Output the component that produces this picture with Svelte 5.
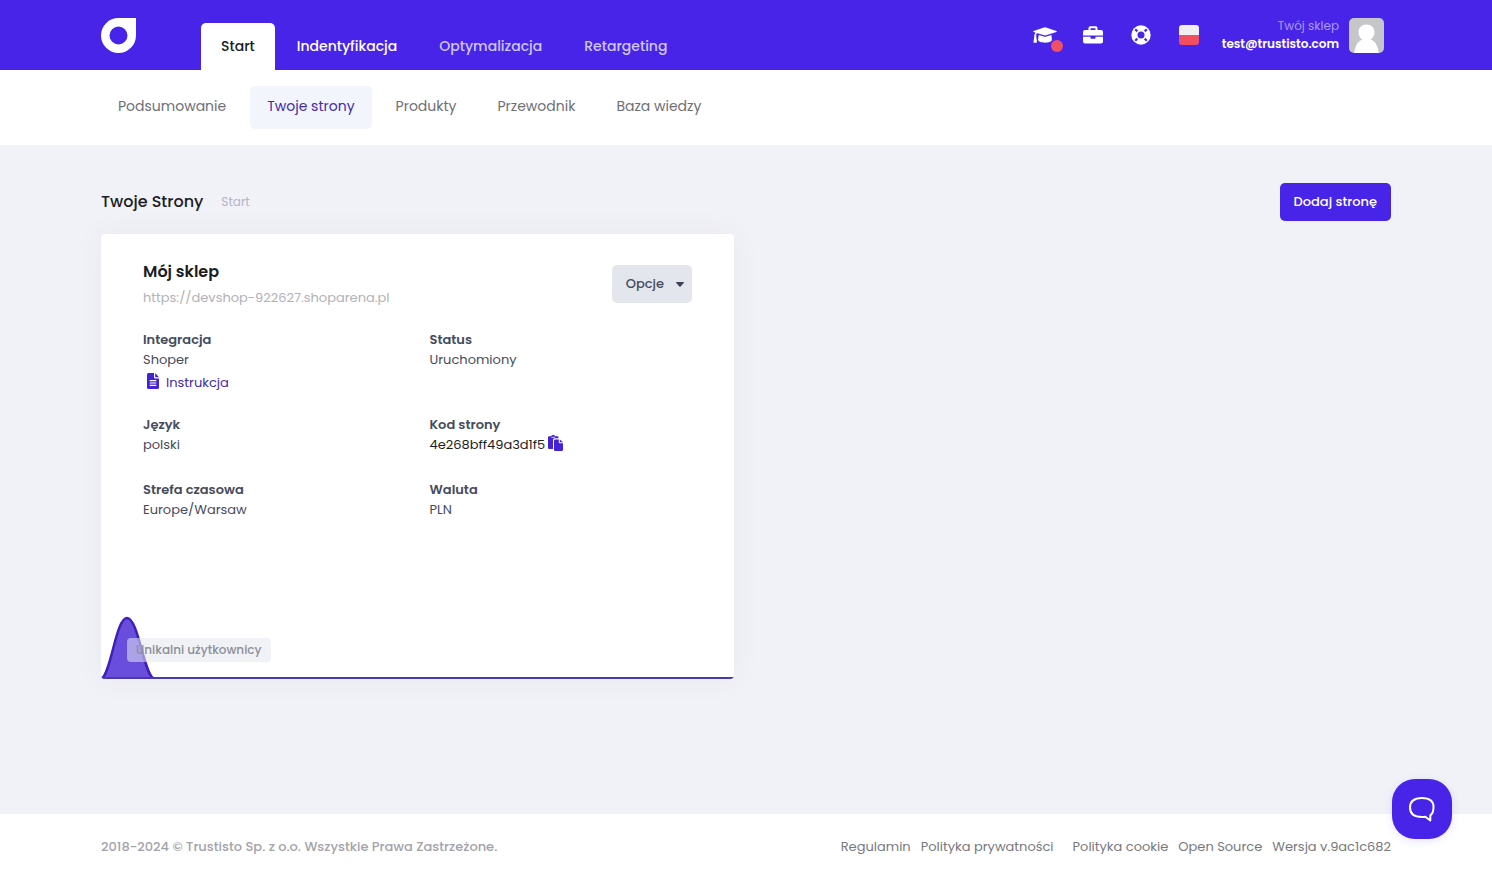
<script>
  let activeTab = "Start";
  let activePage = "Twoje strony";

  const tabs = [
    { name: "Start" },
    { name: "Indentyfikacja", bright: true },
    { name: "Optymalizacja" },
    { name: "Retargeting" }
  ];
  const pages = ["Podsumowanie", "Twoje strony", "Produkty", "Przewodnik", "Baza wiedzy"];

  const site = {
    name: "Mój sklep",
    url: "https://devshop-922627.shoparena.pl",
    code: "4e268bff49a3d1f5"
  };

  function copyCode() {
    navigator.clipboard?.writeText(site.code);
  }
</script>

<div class="page">
  <header class="topbar">
    <div class="container topbar-inner">
      <a class="logo" href="#start" aria-label="Trustisto">
        <svg width="35" height="35" viewBox="0 0 35 35">
          <path fill="#fff" fill-rule="evenodd" d="M17.500 0H35v17.500A17.500 17.500 0 1 1 17.500 0zm0 8.500a9 9 0 1 0 0 18 9 9 0 0 0 0-18z" />
        </svg>
      </a>

      <nav class="tabs">
        {#each tabs as tab}
          <a
            href="#{tab.name}"
            class="tab"
            class:bright={tab.bright}
            class:active={tab.name === activeTab}
            on:click|preventDefault={() => (activeTab = tab.name)}>{tab.name}</a>
        {/each}
      </nav>

      <div class="tools">
        <button class="tool" aria-label="Szkolenia">
          <svg width="24" height="20" viewBox="0 0 24 20" fill="#fff">
            <path d="M12 2.400 Q12.500 2.300 13 2.500L23.400 5.900Q24.300 6.400 23.400 6.900L13 10.300Q12 10.600 11 10.300L4.500 8.200Q3 8.500 2.900 9.600Q3.800 10.200 3.200 11.200L4 17Q4 17.700 3.300 17.700H1.100Q.4 17.700.5 17L1.300 11.200Q.8 10.200 1.700 9.600Q1.800 8.400 2.500 7.600L.6 6.900Q-.3 6.400.6 5.900L11 2.500z" />
            <path d="M5.700 10 10.700 11.600Q12 12 13.300 11.600L18.400 10 18.900 14.800C18.900 18.600 5.100 18.600 5.100 14.800z" />
          </svg>
          <span class="dot"></span>
        </button>
        <button class="tool" aria-label="Narzędzia">
          <svg width="20" height="20" viewBox="0 0 20 20" fill="#fff">
            <path fill-rule="evenodd" d="M5.500 5V3Q5.500 1.200 7.300 1.200H12.700Q14.500 1.200 14.500 3V5H18Q20 5 20 7V10.500H0V7Q0 5 2 5zM7.500 3.200V5H12.500V3.200z" />
            <path d="M0 11.700H7.500V13Q7.500 13.700 8.200 13.700H11.800Q12.500 13.700 12.500 13V11.700H20V16.500Q20 18.500 18 18.500H2Q0 18.500 0 16.500z" />
          </svg>
        </button>
        <button class="tool" aria-label="Pomoc">
          <svg width="20" height="20" viewBox="0 0 20 20">
            <circle cx="10" cy="10" r="9.700" fill="#fff" />
            <path d="M4.200 4.200 15.800 15.800M15.800 4.200 4.200 15.800" stroke="#4824e9" stroke-width="2.200" />
            <circle cx="10" cy="10" r="5.200" fill="#fff" />
            <circle cx="10" cy="10" r="3.500" fill="#4824e9" />
          </svg>
        </button>
        <button class="tool" aria-label="Język: polski">
          <svg width="20" height="20" viewBox="0 0 20 20">
            <path fill="#f1eff3" d="M3 0H17Q20 0 20 3V10H0V3Q0 0 3 0z" />
            <path fill="#ef4f5e" d="M0 10H20V17Q20 20 17 20H3Q0 20 0 17z" />
          </svg>
        </button>
      </div>

      <a class="account" href="#account">
        <span class="who">
          <span class="shop">Twój sklep</span>
          <span class="mail">test@trustisto.com</span>
        </span>
        <svg class="avatar" width="35" height="35" viewBox="0 0 35 35">
          <rect width="35" height="35" fill="#c6c6ca" />
          <path fill="#fff" d="M17.500 6.500c4.600 0 8 3.400 8 7.700 0 3.400-1.800 6-4 7.400 4.300 1.400 7 5 8.300 13.400H5.200c1.300-8.400 4-12 8.300-13.400-2.200-1.400-4-4-4-7.400 0-4.300 3.400-7.700 8-7.700z" />
        </svg>
      </a>
    </div>
  </header>

  <div class="subbar">
    <nav class="container subnav">
      {#each pages as page}
        <a
          href="#{page}"
          class:active={page === activePage}
          on:click|preventDefault={() => (activePage = page)}>{page}</a>
      {/each}
    </nav>
  </div>

  <main class="container content">
    <div class="heading">
      <h1>Twoje Strony</h1>
      <a class="crumb" href="#start">Start</a>
      <button class="btn-primary">Dodaj stronę</button>
    </div>

    <div class="cards">
      <section class="card">
        <div class="card-head">
          <div>
            <h2>{site.name}</h2>
            <a class="url" href={site.url}>{site.url}</a>
          </div>
          <button class="btn-options">
            Opcje
            <svg width="8" height="5" viewBox="0 0 8 5"><path fill="#3f4254" d="M.6 0h6.800q.9.200.3.900L4.600 4.600q-.6.500-1.200 0L.3.900Q-.3.200.6 0z" /></svg>
          </button>
        </div>

        <dl class="details">
          <div class="item tall">
            <dt>Integracja</dt>
            <dd>Shoper</dd>
            <dd>
              <a class="manual" href="#instrukcja">
                <svg width="12" height="16" viewBox="0 0 12 16">
                  <path fill="#4322d6" d="M1.500 0H7V4.500Q7 5.500 8 5.500H12V14.500Q12 16 10.500 16H1.500Q0 16 0 14.500V1.500Q0 0 1.500 0zM8.200 0 12 4.300H8.200z" />
                  <path stroke="#fff" stroke-width="1.200" d="M2.700 7.700H9.300M2.700 10H9.300M2.700 12.300H9.300" />
                </svg>
                Instrukcja
              </a>
            </dd>
          </div>
          <div class="item tall">
            <dt>Status</dt>
            <dd>Uruchomiony</dd>
          </div>
          <div class="item">
            <dt>Język</dt>
            <dd>polski</dd>
          </div>
          <div class="item">
            <dt>Kod strony</dt>
            <dd class="code">
              {site.code}
              <button class="copy" aria-label="Kopiuj kod" on:click={copyCode}>
                <svg width="15" height="16" viewBox="0 0 15 16" fill="#4322d6">
                  <path d="M1.200 1.200H3Q3.500 0 5.200 0T7.400 1.200H9.300Q10.500 1.200 10.500 2.400V3.300H6.700Q5 3.300 5 5V14H1.200Q0 14 0 12.800V2.400Q0 1.200 1.200 1.200z" />
                  <path d="M7.200 4.400H10.800V7.300Q10.800 8.200 11.700 8.200H15V14.800Q15 16 13.800 16H7.200Q6 16 6 14.800V5.600Q6 4.400 7.200 4.400zM11.800 4.400 15 7.200H11.800z" />
                  <path d="M3.300 2.300H7.100" stroke="#fff" stroke-width=".8" />
                </svg>
              </button>
            </dd>
          </div>
          <div class="item">
            <dt>Strefa czasowa</dt>
            <dd>Europe/Warsaw</dd>
          </div>
          <div class="item">
            <dt>Waluta</dt>
            <dd>PLN</dd>
          </div>
        </dl>

        <div class="chart">
          <svg width="100%" height="63">
            <path fill="#4322d6" fill-opacity=".8" d="M1 62C10 57 15 2 26 2S43 57 52 62z" />
            <path fill="none" stroke="#3f1fb8" stroke-width="2.500" d="M1 62C10 57 15 2 26 2S43 57 52 62" />
            <rect x="0" y="61" width="100%" height="2" fill="#4a3aa8" />
          </svg>
          <span class="chart-label">Unikalni użytkownicy</span>
        </div>
      </section>
    </div>
  </main>

  <footer class="footer">
    <div class="container footer-inner">
      <span class="copyright">2018-2024 © Trustisto Sp. z o.o. Wszystkie Prawa Zastrzeżone.</span>
      <nav>
        <a href="#regulamin">Regulamin</a>
        <a class="spaced" href="#prywatnosc">Polityka prywatności</a>
        <a href="#cookie">Polityka cookie</a>
        <a href="#opensource">Open Source</a>
        <span>Wersja v.9ac1c682</span>
      </nav>
    </div>
  </footer>

  <button class="chat" aria-label="Czat">
    <svg width="28" height="28" viewBox="0 0 28 28" fill="none" stroke="#fff" stroke-width="2" stroke-linejoin="round">
      <path d="M14 3C21 3 25.500 5 25.500 12C25.500 16 24.700 18.700 22.300 20.300V25.500L17.300 21.700Q15.800 22 14 22C6 22 2 19 2 12.500C2 6 6.500 3 14 3z" />
    </svg>
  </button>
</div>

<style>
  :global(body) {
    background-color: #f1f2f7;
    color: #464b5c;
    font-family: Poppins, Inter, "Liberation Sans", sans-serif;
    font-size: 13px;
    line-height: 20px;
  }

  a {
    color: inherit;
    text-decoration: none;
  }

  button {
    border: none;
    padding: 0;
    background: none;
    font: inherit;
    cursor: pointer;
  }

  svg {
    display: block;
  }

  .page {
    display: flex;
    flex-direction: column;
    min-height: 100vh;
  }

  .container {
    box-sizing: border-box;
    width: 100%;
    max-width: 1340px;
    margin: 0 auto;
    padding: 0 25px;
  }

  .topbar {
    background-color: #4824e9;
    color: #fff;
  }

  .topbar-inner {
    display: flex;
    align-items: center;
    height: 70px;
  }

  .logo {
    margin-right: 65px;
  }

  .tabs {
    display: flex;
    align-self: flex-end;
    gap: 2px;
    margin-right: auto;
  }

  .tab {
    padding: 13px 20px 14px;
    border-radius: 5px 5px 0 0;
    color: #cfc6fa;
    font-size: 14px;
    font-weight: 500;
  }

  .tab.bright {
    color: #fff;
  }

  .tab.active {
    background-color: #fff;
    color: #1c1c24;
  }

  .tools {
    display: flex;
    gap: 28px;
    margin-right: 23px;
  }

  .tool {
    position: relative;
  }

  .tool:first-child {
    margin-right: -2px;
  }

  .dot {
    position: absolute;
    right: -6px;
    bottom: -7px;
    width: 12px;
    height: 12px;
    border-radius: 50%;
    background-color: #ef5064;
  }

  .account {
    display: flex;
    align-items: center;
    gap: 10px;
    margin-right: 7px;
  }

  .who {
    display: flex;
    flex-direction: column;
    text-align: right;
    font-size: 12px;
    line-height: 18px;
  }

  .shop {
    color: #a99af5;
  }

  .mail {
    font-weight: 600;
  }

  .avatar {
    border-radius: 5px;
  }

  .subbar {
    background-color: #fff;
  }

  .subnav {
    display: flex;
    gap: 7px;
    padding-top: 16px;
    padding-bottom: 16px;
  }

  .subnav a {
    padding: 10px 17px 13px;
    border-radius: 5px;
    color: #6f6f76;
    font-size: 14px;
  }

  .subnav a.active {
    background-color: #f2f5fb;
    color: #432aa8;
  }

  .content {
    flex: 1;
    padding-top: 38px;
    padding-bottom: 38px;
  }

  .heading {
    display: flex;
    align-items: center;
    gap: 18px;
    margin-bottom: 13px;
  }

  h1,
  h2 {
    margin: 0;
    color: #1c1c24;
    font-size: 16px;
    font-weight: 500;
    line-height: 24px;
  }

  h2 {
    font-weight: 600;
  }

  .crumb {
    color: #b3b4c4;
    font-size: 12px;
  }

  .btn-primary {
    height: 38px;
    margin-left: auto;
    padding: 0 14px;
    border-radius: 5px;
    background-color: #4824e9;
    color: #fff;
    font-weight: 500;
  }

  .cards {
    display: grid;
    grid-template-columns: 1fr 1fr;
    gap: 24px;
  }

  .card {
    overflow: hidden;
    border-radius: 4px;
    background-color: #fff;
    box-shadow: 0 0 30px rgba(82, 63, 105, 0.05);
  }

  .card-head {
    display: flex;
    align-items: center;
    justify-content: space-between;
    padding: 26px 42px 20px;
  }

  .url {
    display: block;
    margin-top: 4px;
    color: #b2b2b6;
  }

  .btn-options {
    display: flex;
    align-items: center;
    gap: 12px;
    height: 38px;
    padding: 0 8px 0 14px;
    border-radius: 5px;
    background-color: #e4e6ee;
    color: #464b5c;
    font-weight: 500;
  }

  .details {
    display: grid;
    grid-template-columns: 1fr 1fr;
    column-gap: 24px;
    margin: 0;
    padding: 2px 42px 0;
  }

  .item {
    min-height: 65px;
  }

  .item.tall {
    min-height: 85px;
  }

  dt {
    font-weight: 600;
  }

  dd {
    margin: 0;
  }

  .manual {
    display: flex;
    align-items: flex-start;
    gap: 7px;
    padding: 3px 0 0 4px;
    color: #432aa8;
  }

  .code {
    display: flex;
    align-items: flex-start;
    gap: 3px;
    color: #1c1c24;
  }

  .chart {
    position: relative;
    margin-top: 71px;
  }

  .chart-label {
    position: absolute;
    left: 26px;
    bottom: 17px;
    padding: 2px 9px;
    border-radius: 4px;
    background-color: rgba(228, 232, 238, 0.55);
    color: #8b8e99;
    font-size: 12px;
    font-weight: 500;
  }

  .footer {
    background-color: #fff;
    color: #78787e;
  }

  .footer-inner {
    display: flex;
    justify-content: space-between;
    padding-top: 23px;
    padding-bottom: 22px;
  }

  .copyright {
    color: #a3a3ab;
    font-weight: 500;
  }

  .footer nav {
    display: flex;
    gap: 10px;
  }

  .spaced {
    margin-right: 9px;
  }

  .chat {
    position: fixed;
    right: 40px;
    bottom: 40px;
    display: grid;
    place-items: center;
    width: 60px;
    height: 60px;
    border-radius: 23px;
    background-color: #4824e9;
    box-shadow: 0 2px 8px rgba(72, 36, 233, 0.12);
  }
</style>
